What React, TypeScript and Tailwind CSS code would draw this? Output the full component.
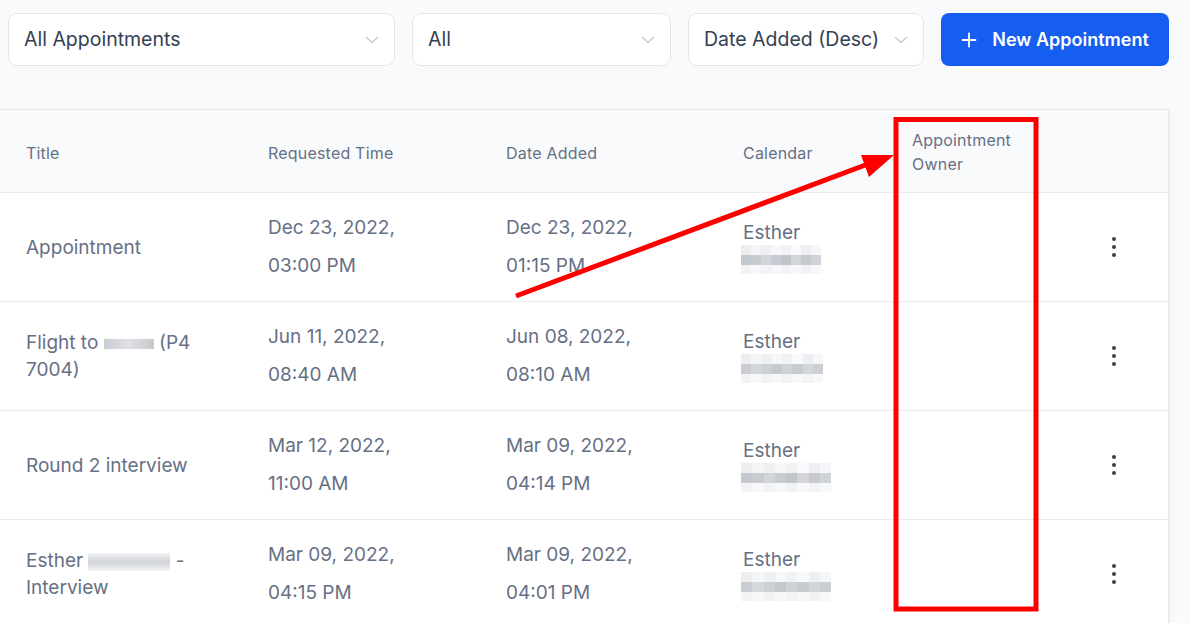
import React from "react";

const Chevron = () => (
  <svg width="16" height="16" viewBox="0 0 16 16" fill="none" className="shrink-0">
    <path d="M2.5 5.5 L8 10.5 L13.5 5.5" stroke="#c4c7cc" strokeWidth="1.3" strokeLinecap="round" strokeLinejoin="round" />
  </svg>
);

const Select = ({ label, w }: { label: string; w: string }) => (
  <div className={`${w} h-[53px] bg-white border border-[#e4e6ea] rounded-[9px] flex items-center justify-between pl-[15px] pr-[14px] pt-[1px]`}>
    <span className="text-[19.5px] text-[#344054]">{label}</span>
    <Chevron />
  </div>
);

const Blur = ({ w, mid, light }: { w: number; mid: string[]; light: string[] }) => (
  <div className="flex flex-col" style={{ width: w }}>
    <div className="flex h-[10px]">
      {light.map((c, i) => (
        <div key={i} className="h-full flex-1" style={{ backgroundColor: c }} />
      ))}
    </div>
    <div className="flex h-[10px]">
      {mid.map((c, i) => (
        <div key={i} className="h-full flex-1" style={{ backgroundColor: c }} />
      ))}
    </div>
    <div className="flex h-[9px]">
      {light.map((c, i) => (
        <div key={i} className="h-full flex-1" style={{ backgroundColor: i % 2 ? "#f7f8f9" : "#f2f3f5" }} />
      ))}
    </div>
  </div>
);

const midA = ["#c4c8cf", "#cacbd0", "#d1d4d8", "#c8cbd1", "#c1c5cb", "#d3d5d9", "#c7c9cf", "#d0d4d9"];
const midB = ["#c9ccd1", "#d4d7db", "#cdd0d5", "#c5c8cd", "#cfd2d7", "#c8cbd0", "#d2d5d9", "#cbced3"];
const lightA = ["#eceef0", "#f4f5f6", "#eef0f2", "#f6f7f8", "#f1f2f4", "#f8f9fa", "#eceef1", "#f5f6f7"];

const Kebab = () => (
  <div className="flex flex-col gap-[4px] items-center">
    <div className="w-[4px] h-[4px] rounded-full bg-[#344054]" />
    <div className="w-[4px] h-[4px] rounded-full bg-[#344054]" />
    <div className="w-[4px] h-[4px] rounded-full bg-[#344054]" />
  </div>
);

const cols = "grid grid-cols-[242px_238px_237px_169px_180px_1fr]";

const DateCell = ({ d, t }: { d: string; t: string }) => (
  <div className="pl-[26px] leading-[38px] whitespace-nowrap">
    <div>{d}</div>
    <div>{t}</div>
  </div>
);

const CalCell = ({ blur }: { blur: React.ReactNode }) => (
  <div className="pl-[26px] flex flex-col">
    <div className="leading-[24px]">Esther</div>
    <div className="-ml-[2px]">{blur}</div>
  </div>
);

type Row = { title: React.ReactNode; req: [string, string]; added: [string, string]; blur: React.ReactNode };

const rows: Row[] = [
  {
    title: <span>Appointment</span>,
    req: ["Dec 23, 2022,", "03:00 PM"],
    added: ["Dec 23, 2022,", "01:15 PM"],
    blur: <Blur w={80} mid={midA} light={lightA} />,
  },
  {
    title: (
      <span className="whitespace-nowrap">
        Flight to{" "}
        <span className="inline-block align-middle w-[50px] h-[10px] bg-gradient-to-r from-[#c9ccd1] via-[#dfe1e4] to-[#c5c8cd]" /> (P4
        <br />
        7004)
      </span>
    ),
    req: ["Jun 11, 2022,", "08:40 AM"],
    added: ["Jun 08, 2022,", "08:10 AM"],
    blur: <Blur w={82} mid={midB} light={lightA} />,
  },
  {
    title: <span>Round 2 interview</span>,
    req: ["Mar 12, 2022,", "11:00 AM"],
    added: ["Mar 09, 2022,", "04:14 PM"],
    blur: <Blur w={90} mid={midA} light={lightA} />,
  },
  {
    title: (
      <span className="whitespace-nowrap">
        Esther{" "}
        <span className="inline-block align-middle w-[82px] h-[18px] bg-gradient-to-b from-[#f2f3f5] via-[#cfd2d7] to-[#f2f3f5]" /> -
        <br />
        Interview
      </span>
    ),
    req: ["Mar 09, 2022,", "04:15 PM"],
    added: ["Mar 09, 2022,", "04:01 PM"],
    blur: <Blur w={90} mid={midB} light={lightA} />,
  },
];

export default function App() {
  return (
    <div className="relative w-[1190px] h-[623px] overflow-hidden bg-[#f9fafb]" style={{ fontFamily: "Inter, 'Noto Sans', sans-serif" }}>
      <div className="flex items-center pl-[8px] pt-[13px] gap-[17px]">
        <Select label="All Appointments" w="w-[387px]" />
        <Select label="All" w="w-[259px]" />
        <Select label="Date Added (Desc)" w="w-[236px]" />
        <div className="w-[228px] h-[53px] rounded-[8px] bg-[#155eef] flex items-center justify-center gap-[15px] text-white">
          <svg width="16" height="16" viewBox="0 0 16 16" fill="none">
            <path d="M8 1.5V14.5M1.5 8H14.5" stroke="white" strokeWidth="1.8" strokeLinecap="round" />
          </svg>
          <span className="text-[18px] font-semibold">New Appointment</span>
        </div>
      </div>

      <div className="mt-[43px] w-[1169px] bg-white border-t border-r border-[#e6e8eb] shadow-[1px_0_3px_rgba(16,24,40,0.06)] text-[19px] text-[#667085]">
        <div className={`${cols} h-[83px] bg-[#f9fafb] border-b border-[#eaecf0] items-center text-[16px] tracking-[0.2px] text-[#667085] pt-[3px]`}>
          <div className="pl-[26px]">Title</div>
          <div className="pl-[26px]">Requested Time</div>
          <div className="pl-[26px]">Date Added</div>
          <div className="pl-[26px]">Calendar</div>
          <div className="pl-[26px] leading-[24px] -mt-[2px]">
            Appointment
            <br />
            Owner
          </div>
          <div />
        </div>
        {rows.map((r, i) => (
          <div key={i} className={`${cols} h-[109px] border-b border-[#eaecf0] items-center`}>
            <div className="pl-[26px] leading-[27px]">{r.title}</div>
            <DateCell d={r.req[0]} t={r.req[1]} />
            <DateCell d={r.added[0]} t={r.added[1]} />
            <CalCell blur={r.blur} />
            <div />
            <div className="flex justify-end pr-[52px]">
              <Kebab />
            </div>
          </div>
        ))}
      </div>

      <svg className="absolute inset-0 pointer-events-none" width="1190" height="623" viewBox="0 0 1190 623">
        <rect x="896" y="119.5" width="140" height="489.5" fill="none" stroke="#ff0000" strokeWidth="5" />
        <line x1="516" y1="296" x2="868" y2="164" stroke="#ff0000" strokeWidth="5" />
        <polygon points="894,155 861,155 869,177" fill="#ff0000" />
      </svg>
    </div>
  );
}
